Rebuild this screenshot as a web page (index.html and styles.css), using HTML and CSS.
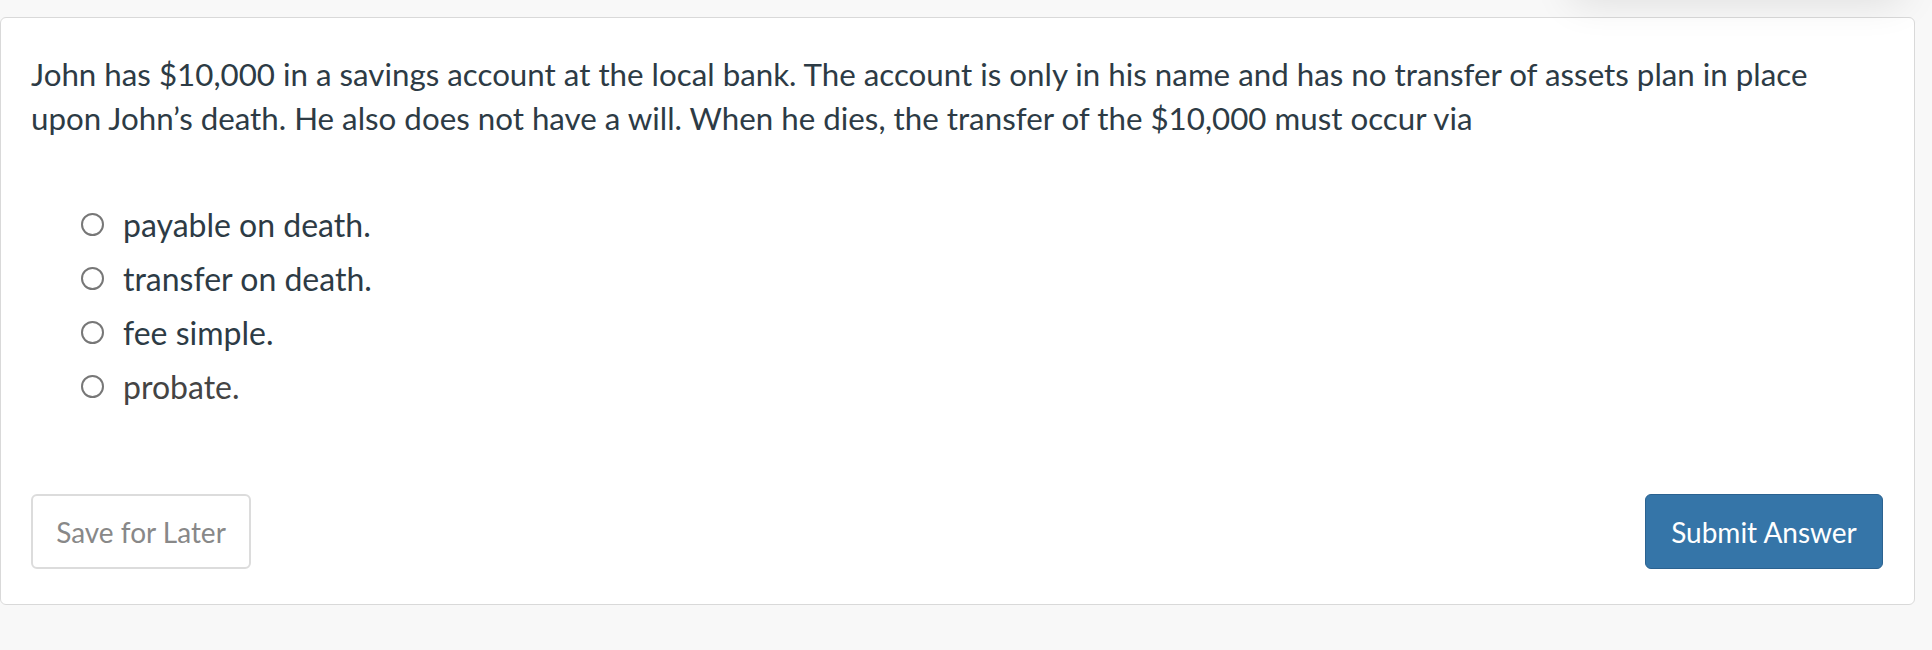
FILE: index.html
```html
<!DOCTYPE html>
<html lang="en">
<head>
    <meta charset="UTF-8">
    <meta name="viewport" content="width=device-width, initial-scale=1.0">
    <title>Question</title>
    <link rel="stylesheet" href="styles.css">
</head>
<body>
    <div class="top-shadow"></div>
    <div class="question-card">
        <p class="question-text">John has $10,000 in a savings account at the local bank. The account is only in his name and has no transfer of assets plan in place upon John’s death. He also does not have a will. When he dies, the transfer of the $10,000 must occur via</p>

        <div class="answers">
            <label class="answer">
                <span class="radio"></span>
                <span class="answer-text">payable on death.</span>
            </label>
            <label class="answer">
                <span class="radio"></span>
                <span class="answer-text">transfer on death.</span>
            </label>
            <label class="answer">
                <span class="radio"></span>
                <span class="answer-text">fee simple.</span>
            </label>
            <label class="answer hover">
                <span class="radio"></span>
                <span class="answer-text">probate.</span>
            </label>
        </div>

        <div class="question-footer">
            <button class="btn btn-default">Save for Later</button>
            <button class="btn btn-primary">Submit Answer</button>
        </div>
    </div>
</body>
</html>
```

FILE: styles.css
```css
body {
    font-family: Lato, "Noto Sans", sans-serif;
    background-color: #f8f8f8;
    margin: 0;
    padding: 17px 0 0 0;
    color: #2d3b45;
    position: relative;
    overflow: hidden;
}

.top-shadow {
    position: absolute;
    top: -40px;
    right: 30px;
    width: 330px;
    height: 40px;
    box-shadow: 0 0 40px rgba(0, 0, 0, 0.12);
    z-index: 5;
}

.question-card {
    width: 1915px;
    box-sizing: border-box;
    background-color: #fff;
    border: 1px solid #d9d9d9;
    border-radius: 6px;
    padding: 34px 31px 35px 30px;
}

.question-text {
    margin: 0;
    max-width: 1830px;
    font-size: 31.3px;
    line-height: 44px;
}

.answers {
    display: flex;
    flex-direction: column;
    gap: 10px;
    margin-top: 62px;
    padding-left: 50px;
}

.answer {
    display: flex;
    align-items: center;
    gap: 19px;
    height: 44px;
    font-size: 32px;
    cursor: pointer;
}

.answer.hover {
    color: #444;
}

.radio {
    width: 23px;
    height: 23px;
    box-sizing: border-box;
    border: 2px solid #777;
    border-radius: 50%;
    background-color: #fff;
    flex-shrink: 0;
}

.question-footer {
    display: flex;
    justify-content: space-between;
    margin-top: 86px;
}

.btn {
    font-family: Lato, "Noto Sans", sans-serif;
    font-size: 28px;
    height: 75px;
    box-sizing: border-box;
    border-radius: 6px;
    cursor: pointer;
}

.btn-default {
    width: 220px;
    background-color: #fff;
    color: #888;
    border: 2px solid #dcdcdc;
}

.btn-primary {
    width: 238px;
    background-color: #3575a8;
    color: #fff;
    border: 1px solid #2b6290;
}
```
